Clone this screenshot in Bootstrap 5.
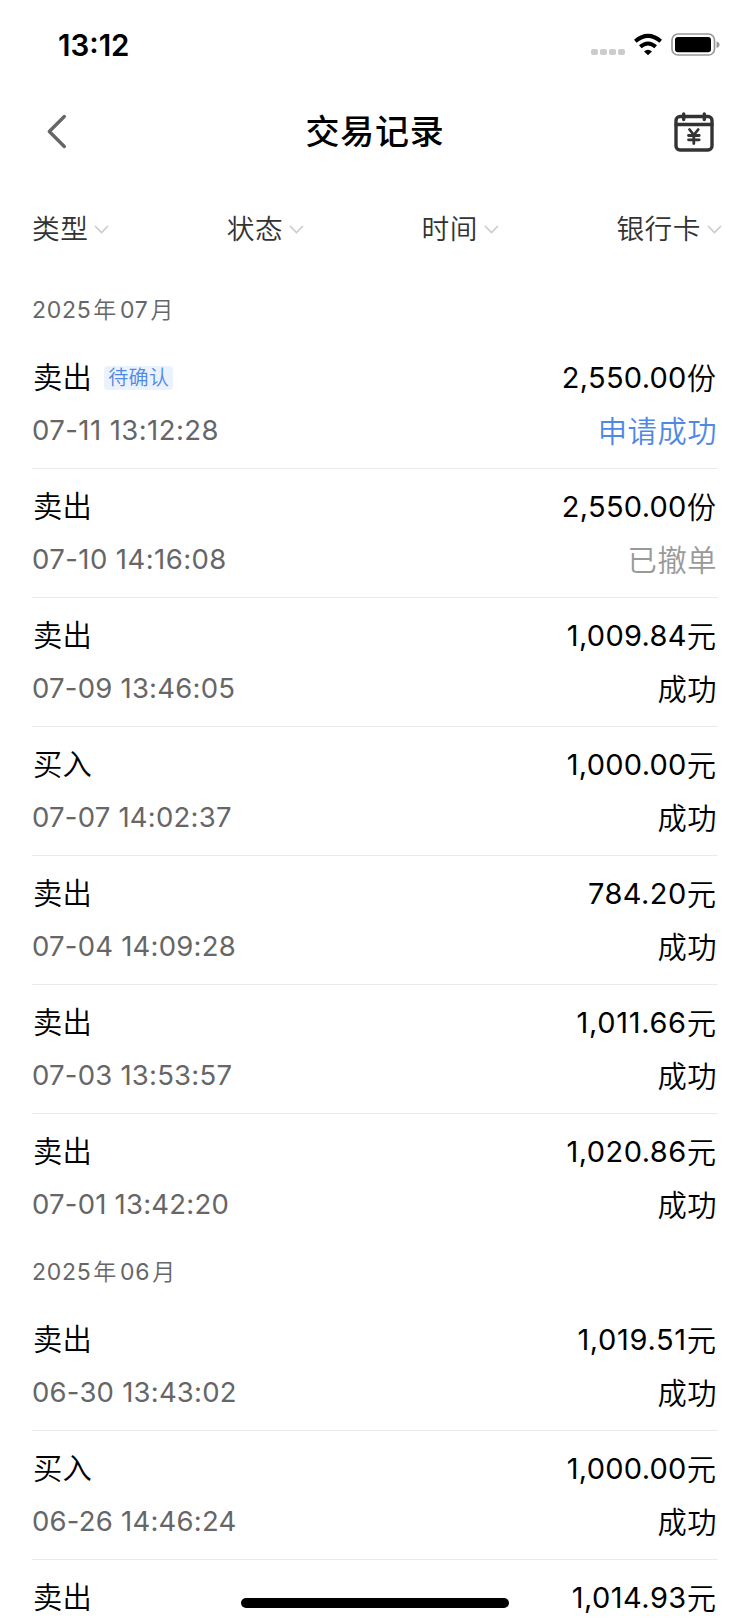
<!DOCTYPE html>
<html lang="zh-CN">
<head>
<meta charset="utf-8">
<meta name="viewport" content="width=device-width, initial-scale=1">
<title>交易记录</title>
<link rel="stylesheet" href="https://cdn.jsdelivr.net/npm/bootstrap@5.3.0/dist/css/bootstrap.min.css">
<style>
body{font-family:Inter,"Noto Sans CJK SC",sans-serif;color:#000;background:#fff;height:1624px;overflow:hidden}
.statusbar{height:90px;padding:0 30px 0 58px}
.clock{font-size:29.5px;font-weight:600;letter-spacing:0;line-height:90px;font-kerning:none}
.titlebar{height:84px;padding:0 35px 0 46px}
.page-title{font-size:34px;font-weight:500;letter-spacing:.7px;line-height:84px;margin:0 9px 0 0}
.filters{height:107px;padding:2px 28px 0 32px;font-size:27.7px;font-weight:350;letter-spacing:.5px;color:#333}
.filter{height:107px;line-height:107px;gap:6px}
.month{height:59px;line-height:59px;padding-left:32px;font-size:23px;letter-spacing:.7px;color:#666}
.month span{margin:0 3px 0 2px;font-weight:350}
.record{height:129px;margin:0 32px;padding:12px 2px 0 1px;border-bottom:1px solid #ebebeb;font-size:29.3px}
.record.final{border-color:transparent}
.line{height:52px;line-height:52px;white-space:nowrap}
.kind{letter-spacing:.3px;font-weight:350}
.when{font-size:27.5px;color:#666;margin-left:-1px;letter-spacing:.22px}
.when.loose{letter-spacing:.43px}
.amount{font-size:29px;letter-spacing:.28px}
.amount.loose{letter-spacing:.45px}
.amount.looser{letter-spacing:.65px}
.amount span{font-weight:350;font-size:29.3px;letter-spacing:0;line-height:1;vertical-align:-1px}
.status-text{letter-spacing:.5px;padding-top:2px;margin-right:-1px;font-weight:350}
.pending{font-size:20px;letter-spacing:.4px;line-height:24px;height:24px;padding:0 4px;color:#4f88e6;background:#ebf2fd;border-radius:4px;margin-left:12px}
.blue{color:#4f88e6}.gray{color:#999}
.home-bar{bottom:16px;left:241px;width:268px;height:10px;background:#000;border-radius:5px}
</style>
</head>
<body class="position-relative">
<header>
  <div class="statusbar d-flex justify-content-between align-items-center">
    <span class="clock">13:12</span>
    <svg width="130" height="24" viewBox="590 33 130 24">
      <g fill="#ccc"><rect x="591" y="49" width="7" height="6" rx="2"/><rect x="600" y="49" width="7" height="6" rx="2"/><rect x="609" y="49" width="7" height="6" rx="2"/><rect x="618" y="49" width="7" height="6" rx="2"/></g>
      <g fill="none" stroke="#000" stroke-width="4"><path d="M635.3 41.3Q648 30.500 660.700 41.3"/><path d="M640.300 46.800Q648 40.200 655.700 46.800"/></g>
      <path d="M644 51.500Q648 48.200 652 51.500L648 55.300Z"/>
      <rect x="672" y="34" width="42.500" height="21" rx="6" fill="none" stroke="#999" stroke-width="1.700"/>
      <rect x="675" y="37" width="36" height="15.300" rx="3"/>
      <path d="M716.500 41.500Q719.500 42.200 719.500 44.700T716.500 48Z" fill="#999"/>
    </svg>
  </div>
  <nav class="titlebar d-flex justify-content-between align-items-center">
    <svg width="40" height="40" viewBox="46 112 40 40" fill="none" stroke="#666" stroke-width="3.400" stroke-linecap="round" stroke-linejoin="round"><path d="M64.300 116.500L49.300 131.500L64.300 146.500"/></svg>
    <h1 class="page-title">交易记录</h1>
    <svg width="42" height="42" viewBox="673 111 42 42" fill="none" stroke="#333" stroke-width="3.400" stroke-linecap="round" stroke-linejoin="round"><rect x="676" y="116.500" width="36" height="33.500" rx="4"/><path d="M676 124.500H712M683.700 114V119.500M704.300 114V119.500"/><path stroke-width="2.800" d="M689.500 129.500L693.800 135L698.200 129.500M688.500 135.500H699.200M688.500 139.800H699.200M693.800 135V143.500"/></svg>
  </nav>
  <div class="filters d-flex justify-content-between">
    <div class="filter d-flex align-items-center">类型<svg width="15" height="11" viewBox="0 0 15 11" fill="none" stroke="#ccc" stroke-width="1.700"><path d="M1 2L7.500 8.500L14 2"/></svg></div>
    <div class="filter d-flex align-items-center">状态<svg width="15" height="11" viewBox="0 0 15 11" fill="none" stroke="#ccc" stroke-width="1.700"><path d="M1 2L7.500 8.500L14 2"/></svg></div>
    <div class="filter d-flex align-items-center">时间<svg width="15" height="11" viewBox="0 0 15 11" fill="none" stroke="#ccc" stroke-width="1.700"><path d="M1 2L7.500 8.500L14 2"/></svg></div>
    <div class="filter d-flex align-items-center">银行卡<svg width="15" height="11" viewBox="0 0 15 11" fill="none" stroke="#ccc" stroke-width="1.700"><path d="M1 2L7.500 8.500L14 2"/></svg></div>
  </div>
</header>
<main>
  <div class="month">2025<span>年</span>07<span>月</span></div>
  <div class="record"><div class="line d-flex justify-content-between"><div class="kind d-flex align-items-center">卖出<span class="pending">待确认</span></div><div class="amount">2,550.00<span>份</span></div></div><div class="line d-flex justify-content-between"><div class="when loose">07-11 13:12:28</div><div class="status-text blue">申请成功</div></div></div>
  <div class="record"><div class="line d-flex justify-content-between"><div class="kind">卖出</div><div class="amount">2,550.00<span>份</span></div></div><div class="line d-flex justify-content-between"><div class="when loose">07-10 14:16:08</div><div class="status-text gray">已撤单</div></div></div>
  <div class="record"><div class="line d-flex justify-content-between"><div class="kind">卖出</div><div class="amount">1,009.84<span>元</span></div></div><div class="line d-flex justify-content-between"><div class="when">07-09 13:46:05</div><div class="status-text">成功</div></div></div>
  <div class="record"><div class="line d-flex justify-content-between"><div class="kind">买入</div><div class="amount">1,000.00<span>元</span></div></div><div class="line d-flex justify-content-between"><div class="when">07-07 14:02:37</div><div class="status-text">成功</div></div></div>
  <div class="record"><div class="line d-flex justify-content-between"><div class="kind">卖出</div><div class="amount loose">784.20<span>元</span></div></div><div class="line d-flex justify-content-between"><div class="when">07-04 14:09:28</div><div class="status-text">成功</div></div></div>
  <div class="record"><div class="line d-flex justify-content-between"><div class="kind">卖出</div><div class="amount looser">1,011.66<span>元</span></div></div><div class="line d-flex justify-content-between"><div class="when">07-03 13:53:57</div><div class="status-text">成功</div></div></div>
  <div class="record final"><div class="line d-flex justify-content-between"><div class="kind">卖出</div><div class="amount loose">1,020.86<span>元</span></div></div><div class="line d-flex justify-content-between"><div class="when">07-01 13:42:20</div><div class="status-text">成功</div></div></div>
  <div class="month">2025<span>年</span>06<span>月</span></div>
  <div class="record"><div class="line d-flex justify-content-between"><div class="kind">卖出</div><div class="amount looser">1,019.51<span>元</span></div></div><div class="line d-flex justify-content-between"><div class="when">06-30 13:43:02</div><div class="status-text">成功</div></div></div>
  <div class="record"><div class="line d-flex justify-content-between"><div class="kind">买入</div><div class="amount">1,000.00<span>元</span></div></div><div class="line d-flex justify-content-between"><div class="when">06-26 14:46:24</div><div class="status-text">成功</div></div></div>
  <div class="record final"><div class="line d-flex justify-content-between"><div class="kind">卖出</div><div class="amount loose">1,014.93<span>元</span></div></div></div>
</main>
<div class="home-bar position-absolute"></div>
<script src="https://cdn.jsdelivr.net/npm/bootstrap@5.3.0/dist/js/bootstrap.bundle.min.js"></script>
</body>
</html>
